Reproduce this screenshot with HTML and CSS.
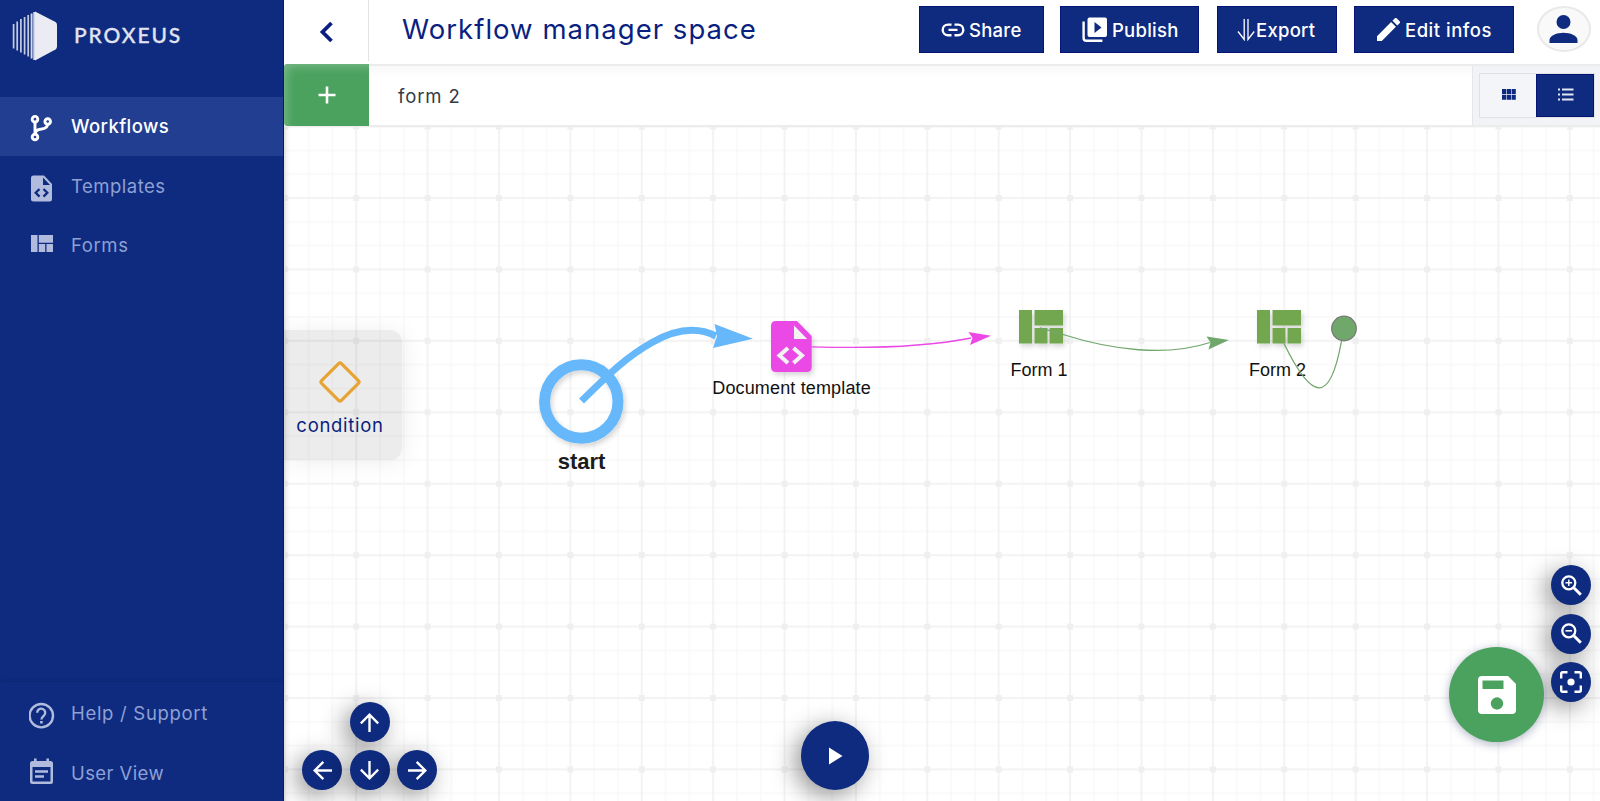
FILE: index.html
```html
<!DOCTYPE html>
<html lang="en">
<head>
<meta charset="utf-8">
<title>Workflow manager space</title>
<link rel="stylesheet" href="styles.css">
</head>
<body>
<div class="app">
  <aside class="sidebar">
    <div class="brand">
      <svg class="brand-mark" width="46" height="50" viewBox="0 0 46 50">
        <path d="M23 0.5 43.500 11Q45 12 45 14V35.500Q45 37.500 43.500 38.500L23 49.500Z" fill="#ebecf3"/>
        <path d="M1.600 13V37.500M5.200 10.500V39.500M8.900 8V41.500M12.600 6V43.500M16.200 4V45.500" stroke="#c5cce2" stroke-width="1.700"/>
        <path d="M19.600 2.500V47.500M22.200 1V49" stroke="#d5daeb" stroke-width="1.900"/>
      </svg>
      <span class="brand-name">PROXEUS</span>
    </div>
    <nav class="nav">
      <a class="nav-item active"><svg class="nav-icon" width="26" height="30" viewBox="0 0 26 30"><g fill="none" stroke="#fff" stroke-width="2.900"><circle cx="6" cy="6.200" r="2.800"/><circle cx="6" cy="24" r="2.800"/><circle cx="18.700" cy="8.500" r="2.800"/><path d="M6 9V21.500C6 17.500 8.500 16.300 12.500 16 16.500 15.600 18.400 14.500 18.600 11"/></g></svg><span class="nav-label l-work">Workflows</span></a>
      <a class="nav-item tall"><svg class="nav-icon" width="26" height="30" viewBox="0 0 26 30"><path fill="#b0bbde" fill-rule="evenodd" d="M4.500 2.500H15L23 11V26a2.500 2.500 0 0 1-2.500 2.500h-16A2.500 2.500 0 0 1 2 26V5a2.500 2.500 0 0 1 2.500-2.500ZM14 4.500V12h7Z"/><path d="M10.500 16 6.700 19.800l3.800 3.800M14.500 16l3.800 3.800-3.800 3.800" fill="none" stroke="#0f2b7f" stroke-width="2.300"/></svg><span class="nav-label l-temp">Templates</span></a>
      <a class="nav-item"><svg class="nav-icon forms" width="26" height="30" viewBox="0 0 26 30"><path fill="#b0bbde" d="M2 4h6.500v17H2zM9.800 4H24v7.700H9.800zM9.800 13h6.400v8H9.800zM17.500 13H24v8h-6.500z"/></svg><span class="nav-label l-forms">Forms</span></a>
    </nav>
    <nav class="nav nav-bottom">
      <a class="nav-item"><svg class="nav-icon" width="26" height="30" viewBox="0 0 26 30"><circle cx="12.300" cy="15.700" r="11.700" fill="none" stroke="#b0bbde" stroke-width="2.400"/><path d="M8.200 12.700a4 4 0 1 1 6.700 2.900C13.300 17 12.400 17.500 12.400 19.600" fill="none" stroke="#b0bbde" stroke-width="2.400"/><path d="M11.100 21h2.600v2.500h-2.600z" fill="#b0bbde"/></svg><span class="nav-label l-help">Help / Support</span></a>
      <a class="nav-item"><svg class="nav-icon cal" width="26" height="30" viewBox="0 0 26 30"><path fill="#b0bbde" fill-rule="evenodd" d="M5 1.500h2.600v2.500h9.800V1.500H20v2.500h1.500Q24 4 24 6.500v18q0 2.500-2.500 2.500h-18Q1 27 1 24.500V6.500q0-2.500 2.500-2.500H5ZM3.500 10V24.500h18V10Z"/><path d="M6 14.500h13M6 19.500h9" stroke="#b0bbde" stroke-width="2.500"/></svg><span class="nav-label l-user">User View</span></a>
    </nav>
  </aside>

  <main class="main">
    <header class="topbar">
      <a class="back"><svg width="16" height="24" viewBox="0 0 16 24"><path d="M13.500 3 4.500 12 13.500 21" fill="none" stroke="#0a1f80" stroke-width="3.800"/></svg></a>
      <h1 class="title">Workflow manager space</h1>
      <div class="actions">
        <button class="btn share"><svg width="24" height="14" viewBox="0 0 24 14"><path d="M10.500 1.600H7a5.200 5.200 0 0 0 0 10.600h3.500M13.500 1.600H17a5.200 5.200 0 0 1 0 10.600h-3.500M7.500 6.900h9" fill="none" stroke="#fff" stroke-width="2.400"/></svg><span>Share</span></button>
        <button class="btn publish"><svg width="26" height="26" viewBox="0 0 26 26"><path fill="#fff" fill-rule="evenodd" d="M7.500.5H23q2 0 2 2V18q0 2-2 2H7.500q-2 0-2-2V2.500q0-2 2-2ZM12.500 5v11l7-5.500Z"/><path d="M1.600 4.500V21q0 2.800 2.800 2.800h16" fill="none" stroke="#fff" stroke-width="2.400"/></svg><span>Publish</span></button>
        <button class="btn export"><svg width="18" height="22" viewBox="0 0 18 22"><path d="M7.200 0V20.500L1 12.500M11 0V20.500L17.200 12.500" fill="none" stroke="#fff" stroke-width="1.300"/></svg><span>Export</span></button>
        <button class="btn edit"><svg width="23" height="23" viewBox="3 3 18 18"><path fill="#fff" d="M3 17.250V21h3.750L17.810 9.940l-3.750-3.750L3 17.250zM20.710 7.040a1 1 0 0 0 0-1.410l-2.340-2.340a1 1 0 0 0-1.410 0l-1.830 1.830 3.750 3.750 1.830-1.830z"/></svg><span>Edit infos</span></button>
      </div>
      <div class="avatar"><svg width="30" height="28" viewBox="0 0 30 28"><circle cx="14.500" cy="7" r="7" fill="#0f2b7f"/><path d="M.5 28V25C.5 20.500 8 17.700 14.500 17.700S28.500 20.500 28.500 25v3Z" fill="#0f2b7f"/></svg></div>
    </header>

    <div class="toolbar">
      <button class="add"><svg width="18" height="18" viewBox="0 0 18 18"><path d="M9 .5v17M.5 9h17" stroke="#fff" stroke-width="2.600"/></svg></button>
      <span class="crumb">form 2</span>
      <div class="views">
        <div class="toggle">
          <span class="view"><svg width="14" height="11" viewBox="0 0 14 11"><path fill="#0f2b7f" d="M0 0h4.200v5.100H0zM4.800 0h4.200v5.100h-4.200zM9.600 0h4.200v5.100h-4.200zM0 5.700h4.200v5.100H0zM4.800 5.700h4.200v5.100h-4.200zM9.600 5.700h4.200v5.100h-4.200z"/></svg></span>
          <span class="view on"><svg width="16" height="13" viewBox="0 0 16 13"><path d="M0 1.500h2M4 1.500h11.500M0 6.500h2M4 6.500h11.500M0 11.500h2M4 11.500h11.500" stroke="#e3e7f3" stroke-width="1.900"/></svg></span>
        </div>
      </div>
    </div>

    <section class="canvas">
      <svg class="diagram" width="1316" height="675" viewBox="284 126 1316 675">
        <defs>
          <pattern id="grid" x="356.200" y="198" width="71.390" height="71.430" patternUnits="userSpaceOnUse">
            <path d="M23.800 0V71.430M47.600 0V71.430M0 23.800H71.390M0 47.600H71.390" stroke="#f6f6f6" stroke-width="1"/>
            <path d="M0 0H71.390M0 0V71.430M71.390 0V71.430M0 71.430H71.390" stroke="#efefef" stroke-width="1.500"/>
            <path d="M0 0h3v3H0zM68.400 0h3v3h-3zM0 68.430h3v3H0zM68.400 68.430h3v3h-3z" fill="#efefef"/>
          </pattern>
          <filter id="soft" x="-30%" y="-30%" width="170%" height="170%"><feDropShadow dx="2" dy="3" stdDeviation="2.500" flood-color="#000" flood-opacity=".16"/></filter>
        </defs>
        <rect x="284" y="126" width="1316" height="675" fill="url(#grid)"/>

        <circle cx="581.300" cy="401.500" r="36.700" fill="none" stroke="#66b8fa" stroke-width="11" filter="url(#soft)"/>
        <path d="M581.500 401C608 375 626 357 652 342.500Q688 322 716 336" fill="none" stroke="#66b8fa" stroke-width="7"/>
        <path d="M714.500 324 753 338.700 713 348 717 336Z" fill="#66b8fa"/>
        <text class="start-label" x="581.500" y="468.500">start</text>

        <g filter="url(#soft)">
          <path d="M776 321H797L811.700 336V367q0 5-5 5H776q-5 0-5-5V326q0-5 5-5Z" fill="#eb48e6"/>
        </g>
        <path d="M794 325.500V339h13.200Z" fill="#f3f3f3"/>
        <path d="M788 348 779.500 355.500 788 363M793.500 348 802 355.500 793.500 363" fill="none" stroke="#f3f3f3" stroke-width="4"/>
        <path d="M811.700 346.800Q910 350 971 338" fill="none" stroke="#eb48e6" stroke-width="1.300"/>
        <path d="M968.500 332 991 335.800 970 345 972.500 338Z" fill="#eb48e6"/>
        <text class="node-label" x="791.500" y="394" textLength="158.500">Document template</text>

        <g fill="#73a74f" filter="url(#soft)">
          <path d="M1019 310h13v33.500h-13zM1034.500 310h28.500v15.500h-28.500zM1034.500 328h13v15.500h-13zM1049.500 328h13.500v15.500h-13.500z"/>
          <path d="M1257 310h13v33.500h-13zM1272.500 310h28.500v15.500h-28.500zM1272.500 328h13v15.500h-13zM1287.500 328h13.500v15.500h-13.500z"/>
        </g>
        <path d="M1040 327.800Q1052 331 1063 334.500C1112 350 1166 357 1210 342.500" fill="none" stroke="#70a76b" stroke-width="1.300"/>
        <path d="M1206.500 336.500 1229 340 1208.500 349.500 1210.500 342.500Z" fill="#70a76b"/>
        <text class="node-label" x="1039" y="376" textLength="57">Form 1</text>
        <text class="node-label" x="1277.500" y="376" textLength="57">Form 2</text>
        <path d="M1284 343.500C1312 401 1330 405 1341.500 341" fill="none" stroke="#70a76b" stroke-width="1.300"/>
        <circle cx="1344" cy="328.500" r="12.300" fill="#70a76b" stroke="#777" stroke-width="1.200"/>
      </svg>

      <div class="palette">
        <svg width="42" height="42" viewBox="0 0 42 42"><rect x="7" y="7" width="28" height="28" rx="2" transform="rotate(45 21 21)" fill="none" stroke="#e7a434" stroke-width="3.200"/></svg>
        <span>condition</span>
      </div>

      <div class="pad">
        <span class="round up"><svg class="arrow" viewBox="4 4 16 16"><path d="M4 12l1.410 1.410L11 7.830V20h2V7.830l5.580 5.590L20 12l-8-8-8 8z"/></svg></span>
        <span class="round left"><svg class="arrow" viewBox="4 4 16 16"><path d="M20 11H7.830l5.590-5.590L12 4l-8 8 8 8 1.410-1.410L7.830 13H20v-2z"/></svg></span>
        <span class="round down"><svg class="arrow" viewBox="4 4 16 16"><path d="M20 12l-1.410-1.410L13 16.170V4h-2v12.170l-5.580-5.590L4 12l8 8 8-8z"/></svg></span>
        <span class="round right"><svg class="arrow" viewBox="4 4 16 16"><path d="M12 4l-1.410 1.410L16.170 11H4v2h12.170l-5.580 5.590L12 20l8-8z"/></svg></span>
      </div>

      <div class="play"><svg width="14" height="18" viewBox="0 0 14 18"><path d="M0 .5 13.500 9 0 17.500Z" fill="#fff"/></svg></div>

      <div class="save"><svg width="38" height="38" viewBox="0 0 38 38"><path fill="#fff" fill-rule="evenodd" d="M4 0H30L38 8V34q0 4-4 4H4q-4 0-4-4V4Q0 0 4 0ZM4.500 4.500V13H25.500V4.500ZM19 21.300a6.200 6.200 0 1 0 .01 0Z"/></svg></div>

      <div class="zooms">
        <span class="round"><svg width="21" height="21" viewBox="0 0 21 21"><g fill="none" stroke="#fff"><circle cx="7.800" cy="7.800" r="6.500" stroke-width="2.300"/><path d="M12.800 12.800 19.800 19.800" stroke-width="3"/><path d="M4.500 7.800h6.600M7.800 4.500v6.600" stroke-width="1.400"/></g></svg></span>
        <span class="round"><svg width="21" height="21" viewBox="0 0 21 21"><g fill="none" stroke="#fff"><circle cx="7.800" cy="7.800" r="6.500" stroke-width="2.300"/><path d="M12.800 12.800 19.800 19.800" stroke-width="3"/><path d="M4.500 7.800h6.600" stroke-width="1.600"/></g></svg></span>
        <span class="round"><svg width="22" height="22" viewBox="0 0 22 22"><path d="M1.200 7.500V2.700q0-1.500 1.500-1.500h4.800M14.500 1.200h4.800q1.500 0 1.500 1.500v4.800M20.800 14.500v4.800q0 1.500-1.500 1.500h-4.800M7.500 20.800H2.700q-1.500 0-1.500-1.500v-4.800" fill="none" stroke="#fff" stroke-width="2.400"/><circle cx="11" cy="11" r="3.600" fill="#fff"/></svg></span>
      </div>
    </section>
  </main>
</div>
</body>
</html>
```
FILE: styles.css
```css
* { box-sizing: border-box; }
body { margin: 0; font-family: Inter, "Liberation Sans", sans-serif; color: #0a1f80; background: #fff; }
svg { display: block; flex: none; }
button { border: 0; font: inherit; }
.app { display: flex; width: 1600px; height: 801px; overflow: hidden; }

.sidebar { width: 284px; flex: none; display: flex; flex-direction: column; background: #0f2b7f; border-right: 1px solid #08157a; }
.brand { height: 97px; display: flex; align-items: flex-start; padding: 11px 0 0 12px; }
.brand-name { margin: 10px 0 0 16px; font-family: Lato, sans-serif; font-size: 21px; line-height: 28px; letter-spacing: 1.900px; color: #e1e4f0; font-weight: 500; -webkit-text-stroke: .3px #e1e4f0; }
.nav { display: flex; flex-direction: column; }
.nav-item { height: 59px; display: flex; align-items: center; padding-left: 29px; color: #8ea0d4; font-size: 18.500px; }
.nav-item.tall { height: 60px; }
.nav-item.active { height: 59px; background: #213e91; color: #fff; font-weight: 500; }
.nav-icon { margin-top: 3px; }
.nav-icon.forms { margin-top: 0; }
.nav-icon.cal { margin-top: 0; }
.nav-label { margin-left: 16px; white-space: nowrap; letter-spacing: .6px; }
.l-work { letter-spacing: .4px; margin-top: -2px; }
.l-temp { letter-spacing: .5px; }
.l-forms { margin-top: -2px; }
.l-help { letter-spacing: .7px; }
.l-user { letter-spacing: .4px; margin-top: 3px; }
.nav-bottom { margin-top: auto; padding-top: 2px; height: 119px; box-shadow: 0 -1px 2px #0c2675; }

.main { flex: 1; min-width: 0; display: flex; flex-direction: column; }
.topbar { height: 64px; display: flex; align-items: flex-start; background: #fff; }
.back { width: 85px; height: 61px; padding-top: 2px; display: flex; align-items: center; justify-content: center; border-right: 1px solid #e3e3e3; }
.title { margin: 11px 0 0 33px; font-size: 27.500px; line-height: 36px; font-weight: 400; letter-spacing: 1.030px; white-space: nowrap; }
.actions { margin-left: auto; display: flex; gap: 17px; padding-top: 6px; }
.btn { height: 47px; padding: 0; display: flex; align-items: center; background: #0f2b7f; border: 1px solid #051475; color: #fff; font-size: 18.500px; font-weight: 500; letter-spacing: .25px; white-space: nowrap; }
.btn span { margin-left: 4px; }
.share { width: 125px; padding-left: 21px; }
.publish { width: 139px; padding-left: 21px; margin-left: -1px; }
.export { width: 120px; padding-left: 19px; margin-left: 1px; }
.export span { margin-left: 1px; }
.edit { width: 160px; padding-left: 22px; letter-spacing: .5px; }
.edit span { margin-left: 5px; }
.avatar { width: 54px; height: 46px; margin: 6px 9px 0 23px; border: 2px solid #e9e9e9; border-radius: 50%; background: #f9f9f9; display: flex; align-items: center; justify-content: center; }

.toolbar { height: 63px; display: flex; align-items: stretch; background: linear-gradient(#f8f8f8, #fff 12px); border-top: 2px solid #ececec; border-bottom: 2px solid #ececec; }
.add { width: 85px; margin: -2px 0 -1px; padding: 0 0 0 1px; display: flex; align-items: center; justify-content: center; background: #4ba25f; border-radius: 4px 0 0 4px; box-shadow: inset 5px 5px 10px -3px #7db98a; }
.crumb { margin-left: 29px; line-height: 60px; font-size: 18.500px; letter-spacing: .9px; color: #333b48; }
.views { margin-left: auto; width: 128px; padding: 7px 5px 7px 6px; background: #f1f3f6; border-left: 1px solid #e4e6e9; }
.toggle { height: 45px; display: flex; border: 1px solid #dfe1e5; background: #f4f5f8; }
.view { flex: 1; display: flex; align-items: center; justify-content: center; padding: 0 0 3px 1px; }
.view.on { background: #0f2b7f; border: 1px solid #051475; }

.canvas { position: relative; flex: 1; overflow: hidden; }
.diagram { margin-top: -1px; }
.canvas::before { content: ""; position: absolute; z-index: 1; inset: 0 auto 0 0; width: 7px; background: linear-gradient(90deg, rgba(0,0,0,.07), transparent); }
.start-label { font: bold 22px "Liberation Sans", Arial, sans-serif; text-anchor: middle; fill: #1c1c1c; }
.node-label { font: 18px "Liberation Sans", Arial, sans-serif; text-anchor: middle; fill: #111; }
.palette { position: absolute; left: 0; top: 203px; width: 118px; height: 130px; padding: 31px 6px 0 0; display: flex; flex-direction: column; align-items: center; background: rgba(0,0,0,.075); border-radius: 0 12px 12px 0; box-shadow: 2px 2px 24px rgba(0,0,0,.07); color: #0a1f80; font-size: 18.500px; letter-spacing: .7px; }
.palette span { margin-top: 10px; line-height: 24px; }
.round { width: 40px; height: 40px; border-radius: 50%; background: #0f2b7f; display: flex; align-items: center; justify-content: center; box-shadow: -6px 6px 24px rgba(0,0,0,.42); }
.arrow { width: 19px; height: 19px; fill: #fff; }
.pad { position: absolute; left: 18px; top: 575px; display: grid; grid-template-columns: repeat(3, 40px); gap: 8px 7.500px; }
.up { grid-column: 2; }
.left { grid-column: 1; }
.play { position: absolute; left: 517px; top: 594px; width: 68px; height: 69px; border-radius: 50%; background: #0f2b7f; display: flex; align-items: center; justify-content: center; padding-left: 2px; box-shadow: -6px 6px 24px rgba(0,0,0,.42); }
.save { position: absolute; z-index: 2; left: 1165px; top: 520px; width: 95px; height: 95px; border-radius: 50%; background: #4ba25f; display: flex; align-items: center; justify-content: center; box-shadow: 0 2px 10px rgba(30,40,90,.35); }
.zooms { position: absolute; left: 1267px; top: 438px; display: flex; flex-direction: column; gap: 8.500px; }
```
